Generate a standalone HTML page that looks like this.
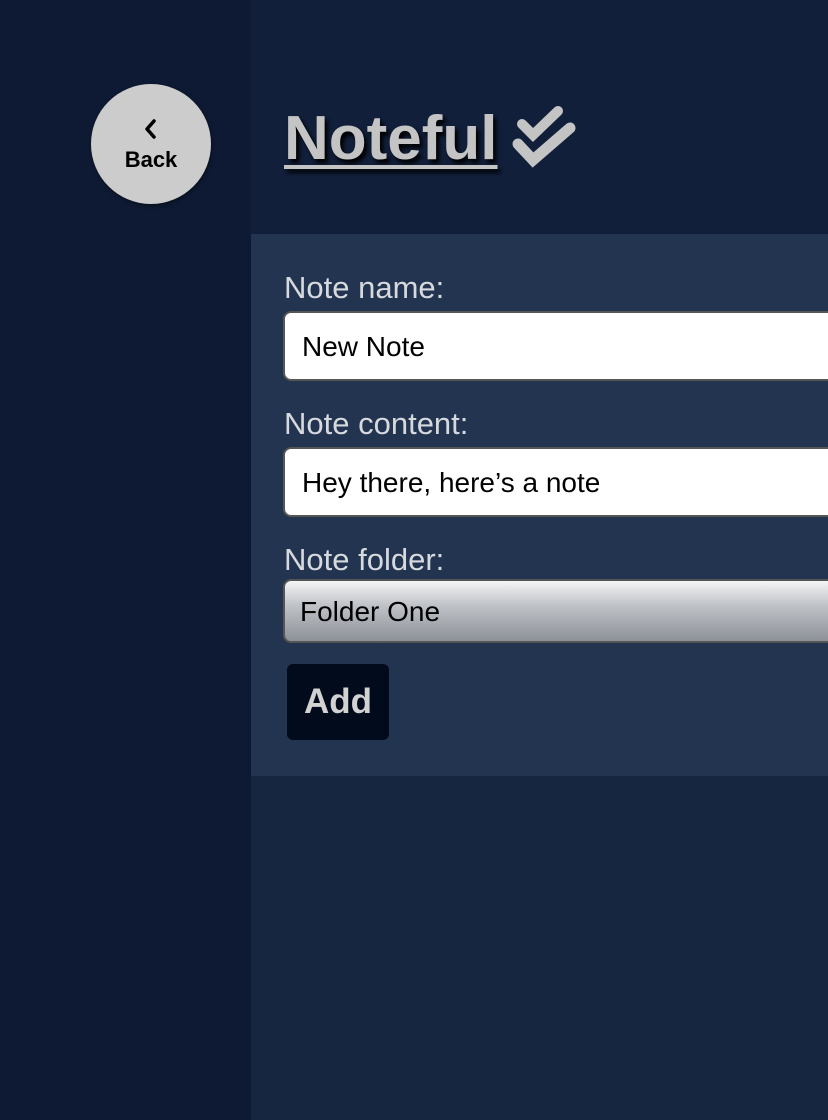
<!DOCTYPE html>
<html><head><style>
*{margin:0;padding:0;box-sizing:border-box}
body{width:828px;height:1120px;overflow:hidden;background:#172640;font-family:"Liberation Sans",sans-serif;position:relative}
.side{position:absolute;left:0;top:0;width:251px;height:1120px;background:#0e1a33}
.head{position:absolute;left:251px;top:0;width:577px;height:234px;background:#111f3a}
.panel{position:absolute;left:251px;top:234px;width:577px;height:542px;background:#22344f}
.back{position:absolute;left:91px;top:84px;width:120px;height:120px;border-radius:50%;background:#cccccc;box-shadow:1px 2px 4px rgba(0,0,0,.4);text-align:center;color:#000;font-weight:bold;font-size:22px}
.title{position:absolute;left:284px;top:103px;font-size:62px;font-weight:bold;color:#c4c4c4;text-decoration:underline;text-decoration-thickness:4px;text-underline-offset:6px;text-shadow:3px 4px 4px #000}
.lbl{position:absolute;left:284px;font-size:31px;color:#d6d9de}
.inp{position:absolute;left:283px;width:560px;height:70px;background:#fff;border:2px solid #555;border-radius:8px;font-size:28px;color:#000;padding:18px 0 0 17px}
.sel{position:absolute;left:283px;top:579px;width:560px;height:64px;border:2px solid #555;border-radius:8px;background:linear-gradient(#f4f5f7,#c0c3c8 40%,#8d9198);font-size:28px;color:#000;padding:15px 0 0 15px}
.add{position:absolute;left:287px;top:664px;width:102px;height:76px;background:#020b1c;border-radius:6px;color:#d2d2d2;font-weight:bold;font-size:35px;text-align:center;line-height:76px}
</style></head><body>
<div class="side"></div><div class="head"></div><div class="panel"></div>
<div class="back">
<svg width="20" height="24" style="position:absolute;left:50px;top:34px" viewBox="0 0 20 24"><path d="M13 3 L6 11 L13 19" stroke="#000" stroke-width="3.5" fill="none" stroke-linecap="round" stroke-linejoin="round"/></svg>
<div style="position:absolute;left:0;width:120px;top:63px">Back</div></div>
<div class="title">Noteful</div>
<svg style="position:absolute;left:0;top:0" width="828" height="234">
<path d="M522 124 L533 135 L558 111" stroke="#c4c4c4" stroke-width="10" fill="none" stroke-linecap="round" stroke-linejoin="miter"/>
<path d="M518 144 L533 160 L570 128" stroke="#c4c4c4" stroke-width="11" fill="none" stroke-linecap="round" stroke-linejoin="miter"/>
</svg>
<div class="lbl" style="top:270px">Note name:</div>
<div class="inp" style="top:311px">New Note</div>
<div class="lbl" style="top:406px">Note content:</div>
<div class="inp" style="top:447px">Hey there, here’s a note</div>
<div class="lbl" style="top:542px">Note folder:</div>
<div class="sel">Folder One</div>
<div class="add">Add</div>
</body></html>
